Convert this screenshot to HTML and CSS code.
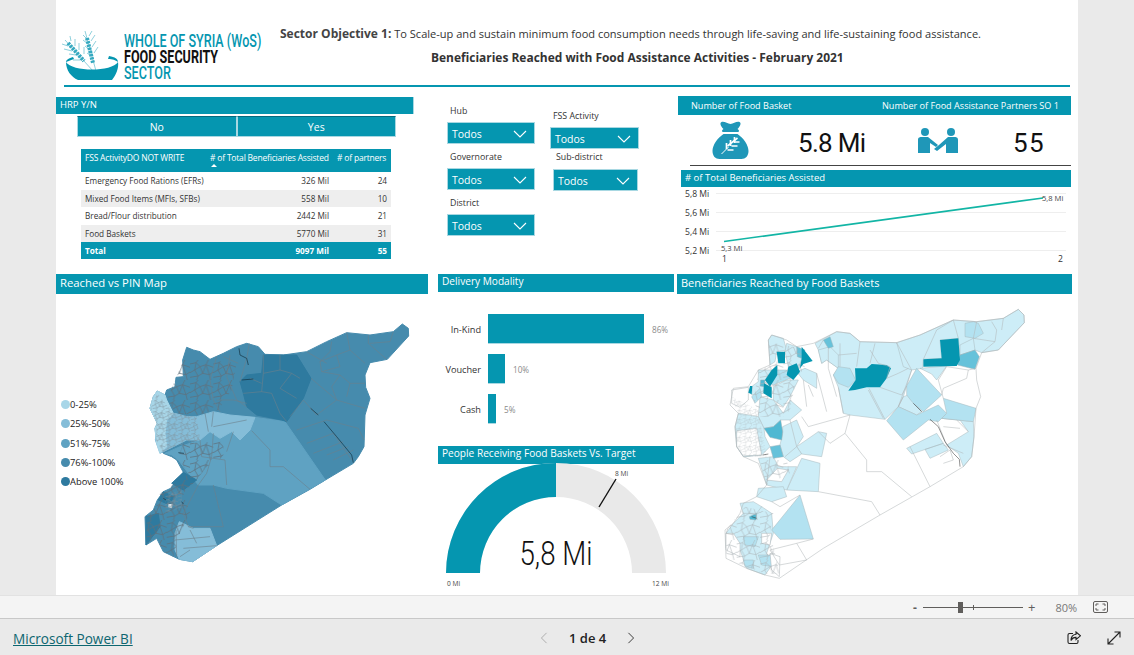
FILE: index.html
```html
<!DOCTYPE html>
<html lang="en">
<head>
<meta charset="utf-8">
<title>Whole of Syria Food Security Sector</title>
<link rel="stylesheet" href="styles.css">
</head>
<body>
<main class="report">
  <header class="head">
    <div class="logo">
      <svg class="logo-mark" viewBox="0 0 60 50" aria-hidden="true">
        <g class="stem">
          <path d="M2 7 L30 38"/>
          <path d="M22 -2 L33 38"/>
          <path d="M5 13 L-1 11 M9 18 L1 16 M13 22 L6 21 M17 27 L10 27 M8 8 L7 3 M12 13 L12 6 M16 17 L16 10 M21 21 L21 14"/>
          <path d="M24 6 L20 2 M25 11 L20 7 M27 17 L22 13 M28 23 L24 20 M26 3 L29 -2 M28 8 L32 2 M29 14 L33 8 M31 20 L35 14"/>
        </g>
        <g class="grain">
          <path d="M5 10 L21 28"/>
          <path d="M24 5 L30 30"/>
        </g>
        <path class="bowl" d="M3 29 C9 39 49 39 55 29 C56 35 53 42 49 47 L15 47 C8 44 3 37 3 29 Z M46 23 C52 24 55 26 55 29 C52 27 50 26 45 26 Z M3 29 C3 27 6 25 10 24 L11 26 C8 27 6 28 3 29 Z"/>
      </svg>
      <div class="logo-text">
        <span class="logo-teal">WHOLE OF SYRIA (WoS)</span>
        <span class="logo-black">FOOD SECURITY</span>
        <span class="logo-teal logo-sector">SECTOR</span>
      </div>
    </div>
    <div class="titles">
      <p class="objective"><strong>Sector Objective 1:</strong> To Scale-up and sustain minimum food consumption needs through life-saving and life-sustaining food assistance.</p>
      <h1 class="main-title">Beneficiaries Reached with Food Assistance Activities - February 2021</h1>
    </div>
  </header>
  <div class="rule"></div>

  <section class="row-top">
    <div class="col-hrp">
      <div class="bar bar-hrp">HRP Y/N</div>
      <div class="tabs">
        <div class="tab">No</div>
        <div class="tab">Yes</div>
      </div>
      <table class="matrix">
        <thead>
          <tr>
            <th class="c1">FSS ActivityDO NOT WRITE</th>
            <th class="c2"># of Total Beneficiaries Assisted<span class="sort"></span></th>
            <th class="c3"># of partners</th>
          </tr>
        </thead>
        <tbody>
          <tr><td>Emergency Food Rations (EFRs)</td><td class="num">326 Mil</td><td class="num">24</td></tr>
          <tr class="alt"><td>Mixed Food Items (MFIs, SFBs)</td><td class="num">558 Mil</td><td class="num">10</td></tr>
          <tr><td>Bread/Flour distribution</td><td class="num">2442 Mil</td><td class="num">21</td></tr>
          <tr class="alt"><td>Food Baskets</td><td class="num">5770 Mil</td><td class="num">31</td></tr>
        </tbody>
        <tfoot>
          <tr><td>Total</td><td class="num">9097 Mil</td><td class="num">55</td></tr>
        </tfoot>
      </table>
    </div>

    <div class="col-filters">
      <div class="filter-col">
        <div class="slicer"><span class="slicer-label">Hub</span><div class="select">Todos<svg class="chev" viewBox="0 0 14 8"><path d="M1 1 L7 7 L13 1"/></svg></div></div>
        <div class="slicer"><span class="slicer-label">Governorate</span><div class="select">Todos<svg class="chev" viewBox="0 0 14 8"><path d="M1 1 L7 7 L13 1"/></svg></div></div>
        <div class="slicer"><span class="slicer-label">District</span><div class="select">Todos<svg class="chev" viewBox="0 0 14 8"><path d="M1 1 L7 7 L13 1"/></svg></div></div>
      </div>
      <div class="filter-col filter-col-2">
        <div class="slicer slicer-fss"><span class="slicer-label">FSS Activity</span><div class="select select-wide">Todos<svg class="chev" viewBox="0 0 14 8"><path d="M1 1 L7 7 L13 1"/></svg></div></div>
        <div class="slicer slicer-sub"><span class="slicer-label">Sub-district</span><div class="select select-sub">Todos<svg class="chev" viewBox="0 0 14 8"><path d="M1 1 L7 7 L13 1"/></svg></div></div>
      </div>
    </div>

    <div class="col-kpi">
      <div class="bar bar-kpi"><span>Number of Food Basket</span><span>Number of Food Assistance Partners SO 1</span></div>
      <div class="kpis">
        <svg class="ico-bag" viewBox="0 0 36 38" aria-hidden="true">
          <path class="ico" d="M9 1 C12 0 15 3 18 3 C21 3 24 0 27 1 C29 2 28 5 25 8 C27 9 27 11 25 11 L11 11 C9 11 9 9 11 8 C8 5 7 2 9 1 Z M11 13 L25 13 C31 17 36 24 36 30 C36 35 33 38 29 38 L7 38 C3 38 0 35 0 30 C0 24 5 17 11 13 Z"/>
          <g class="ico-wheat">
            <path class="ico-stalk" d="M9 33 L16 26"/>
            <path d="M15 25 L25 17"/>
            <path d="M14 22 L14 28 M18 19 L18 25 M22 16 L22 22 M15 29 L21 29 M19 25 L25 25 M22 21 L27 21"/>
          </g>
        </svg>
        <span class="kpi-val kpi-a">5.8 Mi</span>
        <svg class="ico-hands" viewBox="0 0 40 25" aria-hidden="true">
          <circle class="ico" cx="7" cy="4" r="4"/>
          <circle class="ico" cx="33" cy="4" r="4"/>
          <path class="ico" d="M0 12 C0 9 2 9 4 9 L10 9 L20 17 L18 19 L12 15 L12 25 L0 25 Z M40 12 C40 9 38 9 36 9 L30 9 L21 17 L16 21 L19 23 L28 16 L28 25 L40 25 Z"/>
        </svg>
        <span class="kpi-val kpi-b">55</span>
      </div>
      <div class="divider"></div>
      <div class="bar bar-line"># of Total Beneficiaries Assisted</div>
      <svg class="line-chart" viewBox="678 187 393 74" aria-label="Line chart">
        <g class="grid-l">
          <path d="M716 193.5H1066M716 212.5H1066M716 231.5H1066M716 250.5H1066"/>
        </g>
        <g class="axis-t">
          <text x="685" y="197">5,8 Mi</text>
          <text x="685" y="216">5,6 Mi</text>
          <text x="685" y="235">5,4 Mi</text>
          <text x="685" y="254">5,2 Mi</text>
          <text x="722" y="262">1</text>
          <text x="1058" y="262">2</text>
        </g>
        <path class="trend" d="M724 241.5 L1043 198"/>
        <g class="data-t">
          <text x="721" y="251">5,3 Mi</text>
          <text x="1042" y="201">5,8 Mi</text>
        </g>
      </svg>
    </div>
  </section>

  <section class="row-bottom">
    <div class="col-map">
      <div class="bar bar-big">Reached vs PIN Map</div>
      <div class="map-panel">
        <ul class="legend">
          <li><i class="dot d1"></i>0-25%</li>
          <li><i class="dot d2"></i>25%-50%</li>
          <li><i class="dot d3"></i>51%-75%</li>
          <li><i class="dot d4"></i>76%-100%</li>
          <li><i class="dot d5"></i>Above 100%</li>
        </ul>
        <svg class="map" viewBox="18 -18 1116 903" aria-label="Reached versus PIN map of Syria">
          <defs>
            <pattern id="meshA" width="70" height="60" patternUnits="userSpaceOnUse">
              <path class="mesh-a" d="M0 12 L18 8 L30 20 L48 14 L70 22 M18 8 L14 30 L30 20 M30 20 L38 40 L48 14 M14 30 L0 38 M14 30 L24 48 L38 40 L58 44 L70 36 M58 44 L48 14 M24 48 L20 60 M58 44 L62 60 M24 0 L18 8 M55 0 L48 14 M0 52 L24 48"/>
            </pattern>
            <pattern id="meshB" width="70" height="60" patternUnits="userSpaceOnUse" patternTransform="scale(.55)">
              <path class="mesh-b" d="M0 12 L18 8 L30 20 L48 14 L70 22 M18 8 L14 30 L30 20 M30 20 L38 40 L48 14 M14 30 L0 38 M14 30 L24 48 L38 40 L58 44 L70 36 M58 44 L48 14 M24 48 L20 60 M58 44 L62 60 M24 0 L18 8 M55 0 L48 14 M0 52 L24 48"/>
            </pattern>
          </defs>
          <path class="m4" d="M1057 72 L1075 85 L1076 108 L1012 178 L960 188 L945 225 L947 262 L960 295 L945 345 L942 440 L925 470 L910 490 L826 540 L780 568 L695 615 L500 737 L428 785 L388 778 L340 755 L320 715 L288 735 L285 650 L310 630 L322 600 L340 575 L362 565 L400 517 L380 480 L365 470 L340 460 L320 430 L315 385 L322 370 L300 325 L310 290 L322 273 L345 285 L350 270 L375 260 L378 232 L400 230 L398 180 L410 142 L430 150 L450 155 L480 178 L520 160 L560 140 L590 130 L625 140 L645 163 L700 165 L770 155 L830 125 L890 98 L960 105 L1030 95 Z"/>
          <path class="m3" d="M615 352 L705 365 L826 540 L695 615 L640 580 L530 565 L490 555 L445 555 L415 520 L385 480 L365 465 L345 460 L390 440 L450 420 L480 395 L510 415 L545 395 L570 420 L600 390 Z"/>
          <path class="m2" d="M440 350 L490 335 L540 345 L615 352 L600 390 L570 420 L545 395 L510 415 L480 395 L450 420 L410 420 L370 440 L330 460 L316 420 L322 370 L340 350 L375 340 L410 350 Z"/>
          <path class="m1" d="M322 273 L345 285 L350 300 L370 340 L350 360 L345 400 L350 440 L330 460 L320 430 L315 385 L322 370 L300 325 L310 290 Z"/>
          <path class="m2" d="M388 665 L430 685 L480 685 L500 737 L428 785 L388 778 L375 750 L375 700 Z"/>
          <path class="m5" d="M640 165 L740 165 L783 235 L760 295 L710 365 L695 360 L620 345 L590 320 L580 280 L570 245 L590 225 L635 220 Z"/>
          <path class="m5" d="M288 650 L325 640 L330 680 L288 735 Z"/>
          <path class="m5" d="M340 575 L370 590 L360 615 L325 600 Z M365 550 L400 517 L440 540 L400 570 Z"/>
          <path class="m-hole" d="M355 612 L368 612 L366 625 L355 622 Z"/>
          <path class="mesh-fill-a" d="M400 180 L480 180 L560 190 L545 270 L505 330 L440 345 L375 340 L352 295 L378 235 Z"/>
          <path class="mesh-fill-a" d="M400 430 L520 425 L520 470 L470 500 L440 540 L410 515 L385 470 Z"/>
          <path class="mesh-fill-a" d="M330 580 L420 520 L440 540 L400 580 L420 640 L390 700 L370 770 L340 755 L320 715 L290 730 L290 655 L325 610 Z"/>
          <path class="mesh-fill-b" d="M322 280 L370 340 L440 350 L450 420 L370 440 L340 460 L318 420 L320 370 L302 325 Z"/>
          <path class="mesh-fill-b" d="M345 585 L395 570 L395 625 L345 640 Z"/>
          <path class="l" d="M845 125 L840 155 L810 185 L815 215 L870 225 L900 250 L945 250 M890 98 L900 150 L945 190 M955 105 L955 130 L1010 178 M1030 95 L1020 125 L960 130 M810 185 L860 165 L870 200 L815 215 M783 235 L860 300 L800 345 L760 300 M860 300 L945 325 M740 390 L830 360 L925 385 L942 420 M770 430 L850 400 L905 480 M790 460 L880 425 M830 465 L895 440 M850 480 L910 450 M770 155 L830 190 M900 150 L860 165 M870 225 L845 260 L860 300 M900 250 L890 290 M720 350 L760 300"/>
          <path class="l" d="M690 165 L690 210 L640 220 L640 165 M690 210 L725 220 L750 235 M725 220 L690 265 L740 295 M640 220 L635 275 L665 280 L690 340 L710 365 M580 280 L635 275 M600 235 L635 250"/>
          <path class="l" d="M598 130 L590 175 L570 245 M540 165 L530 230 L560 300 L590 320 M500 170 L480 240 L490 300 L510 335 M500 300 L550 300 L590 310 M520 170 L565 190"/>
          <path class="l" d="M490 335 L485 380 M490 380 L590 360 M465 340 L475 395"/>
          <path class="l" d="M450 420 L455 470 L525 480 M490 400 L485 470 L470 520 L445 555 M530 455 L550 395 M525 480 L530 555"/>
          <path class="l" d="M605 392 L660 450 L660 500 L700 500 L780 568 M490 555 L520 680 L415 680 L400 640 L445 555 M378 690 L380 770 M375 720 L480 710 M400 745 L500 737 M390 770 L420 750 M420 690 L440 730 M415 680 L430 685"/>
          <path class="river" d="M822 365 L860 410 L905 465 L910 488 M782 325 L805 345 M567 145 L570 165 L590 175 L595 195 M575 240 L610 237 M385 458 L402 460 M395 605 L400 612 M340 595 L348 600"/>
        </svg>
      </div>
    </div>

    <div class="col-mid">
      <div class="bar bar-mid">Delivery Modality</div>
      <div class="bars">
        <div class="bar-row"><span class="bar-name">In-Kind</span><i class="hbar w86"></i><span class="bar-val">86%</span></div>
        <div class="bar-row"><span class="bar-name">Voucher</span><i class="hbar w10"></i><span class="bar-val">10%</span></div>
        <div class="bar-row"><span class="bar-name">Cash</span><i class="hbar w5"></i><span class="bar-val">5%</span></div>
      </div>
      <div class="bar bar-mid bar-gauge">People Receiving Food Baskets Vs. Target</div>
      <svg class="gauge" viewBox="438 464 236 131" aria-label="Gauge">
        <path class="g-bg" d="M446 573 A110 110 0 0 1 666 573 L632 573 A76 76 0 0 0 480 573 Z"/>
        <path class="g-fg" d="M446 573 A110 110 0 0 1 556 463 L556 497 A76 76 0 0 0 480 573 Z"/>
        <path class="g-target" d="M599 507 L616 479"/>
        <text class="g-small" x="615" y="476">8 Mi</text>
        <text class="g-small" x="447" y="586">0 Mi</text>
        <text class="g-small" x="652" y="586">12 Mi</text>
        <text class="g-value" x="556" y="565" textLength="73" lengthAdjust="spacingAndGlyphs">5,8 Mi</text>
      </svg>
    </div>

    <div class="col-map2">
      <div class="bar bar-big bar-big-2">Beneficiaries Reached by Food Baskets</div>
      <svg class="map map2" viewBox="-39 -18 1185 903" aria-label="Beneficiaries reached by food baskets map of Syria">
        <defs>
          <pattern id="meshC" width="70" height="60" patternUnits="userSpaceOnUse">
            <path class="mesh-c" d="M0 12 L18 8 L30 20 L48 14 L70 22 M18 8 L14 30 L30 20 M30 20 L38 40 L48 14 M14 30 L0 38 M14 30 L24 48 L38 40 L58 44 L70 36 M58 44 L48 14 M24 48 L20 60 M58 44 L62 60 M24 0 L18 8 M55 0 L48 14 M0 52 L24 48"/>
          </pattern>
          <pattern id="meshD" width="70" height="60" patternUnits="userSpaceOnUse" patternTransform="scale(.45)">
            <path class="mesh-c" d="M0 12 L18 8 L30 20 L48 14 L70 22 M18 8 L14 30 L30 20 M30 20 L38 40 L48 14 M14 30 L0 38 M14 30 L24 48 L38 40 L58 44 L70 36 M58 44 L48 14 M24 48 L20 60 M58 44 L62 60 M24 0 L18 8 M55 0 L48 14 M0 52 L24 48"/>
          </pattern>
        </defs>
        <path class="w" d="M985 28 L1002 45 L1003 68 L925 150 L875 158 L858 205 L860 240 L872 290 L858 325 L852 410 L845 470 L820 500 L720 560 L570 645 L400 745 L268 835 L225 825 L170 805 L108 775 L105 690 L130 670 L150 640 L160 610 L200 590 L230 555 L205 490 L160 470 L140 440 L135 380 L145 340 L120 315 L130 265 L175 260 L205 210 L240 195 L235 120 L245 105 L290 120 L320 140 L370 130 L440 95 L480 100 L510 125 L620 128 L690 105 L790 60 L860 65 L940 55 Z"/>
        <g class="p1">
          <path d="M375 130 L440 95 L480 100 L510 125 L620 128 L665 210 L650 258 L640 290 L625 320 L585 358 L480 345 L460 340 L445 262 L430 225 L445 205 L410 180 L395 190 L385 150 Z"/>
          <path d="M620 128 L690 105 L790 60 L860 65 L940 55 L985 28 L1002 45 L1003 68 L925 150 L875 158 L855 150 L810 165 L805 115 L750 120 L755 175 L700 178 L698 205 L665 210 L640 200 L620 128 Z"/>
          <path d="M690 205 L770 198 L740 240 L725 222 Z"/>
          <path d="M640 290 L655 285 L695 335 L680 345 L625 320 Z"/>
          <path d="M755 355 L850 365 L852 410 L845 470 L820 500 L805 460 L770 435 L835 395 L810 360 Z"/>
          <path d="M650 445 L740 400 L760 430 L665 462 Z M705 448 L760 430 L775 450 L720 475 Z"/>
          <path d="M320 440 L385 395 L410 400 L395 470 L335 462 Z"/>
          <path d="M290 570 L335 475 L390 490 L385 575 Z"/>
          <path d="M320 215 L345 205 L380 220 L380 265 L340 240 Z"/>
          <path d="M385 150 L420 140 L445 165 L445 205 L410 180 L395 190 Z"/>
          <path d="M810 165 L810 135 L850 115 L855 150 Z"/>
          <path d="M235 120 L245 105 L280 115 L290 150 L260 155 L255 185 L240 195 Z"/>
          <path d="M290 130 L320 140 L335 175 L330 205 L295 200 L285 155 Z"/>
          <path d="M205 210 L245 210 L225 240 L220 280 L185 285 L187 258 L205 245 Z"/>
          <path d="M250 260 L290 240 L325 240 L300 290 L280 320 L250 300 Z"/>
          <path d="M210 290 L250 300 L280 340 L300 300 L335 330 L300 360 L272 360 L250 380 L222 385 L205 350 Z"/>
          <path d="M145 340 L205 350 L222 385 L225 410 L240 440 L215 465 L170 470 L160 470 L140 440 L135 380 Z"/>
          <path d="M278 380 L320 360 L340 410 L320 440 L335 462 L300 485 L280 470 L270 435 L278 400 Z"/>
          <path d="M205 475 L250 470 L265 500 L290 500 L320 500 L290 570 L230 555 Z"/>
          <path d="M205 565 L280 560 L290 590 L245 605 L200 590 Z"/>
          <path d="M130 670 L160 640 L215 620 L245 640 L250 700 L230 760 L250 790 L225 825 L170 805 L150 750 L108 745 L108 700 Z"/>
          <path d="M150 610 L190 605 L215 620 L200 640 L160 640 Z"/>
        </g>
        <g class="p2">
          <path d="M650 258 L680 205 L755 285 L700 335 L670 310 L650 285 Z"/>
          <path d="M590 362 L625 320 L680 345 L745 315 L770 340 L745 365 L715 360 L640 420 Z"/>
          <path d="M760 295 L858 325 L850 365 L755 355 L770 340 Z"/>
          <path d="M445 200 L480 205 L497 240 L475 262 L445 250 L430 225 Z"/>
          <path d="M245 690 L330 585 L370 717 L270 718 Z"/>
          <path d="M850 65 L865 70 L880 100 L855 115 L825 110 L825 70 Z"/>
          <path d="M185 290 L210 265 L215 290 L195 310 Z M225 240 L255 210 L290 210 L300 235 L250 255 Z"/>
          <path d="M160 780 L190 780 L190 805 L165 800 Z M205 765 L245 765 L250 800 L215 795 Z M160 710 L205 710 L195 740 L165 735 Z"/>
        </g>
        <path class="cell-w" d="M140 392 L200 385 L215 465 L160 468 L140 440 Z M125 270 L175 262 L175 300 L150 322 L125 310 Z M150 770 L108 750 L108 700 L130 700 L150 730 Z M215 700 L245 700 L240 735 L215 730 Z M240 760 L270 770 L268 830 L245 810 Z M262 505 L295 510 L275 545 L230 540 Z"/>
        <g class="p3">
          <path d="M810 165 L855 150 L868 170 L855 208 L803 195 Z"/>
          <path d="M240 440 L270 435 L280 470 L250 475 Z"/>
          <path d="M400 120 L420 110 L430 140 L415 145 Z"/>
          <path d="M320 140 L345 150 L335 175 L322 170 Z"/>
        </g>
        <g class="p4">
          <path d="M250 380 L272 360 L278 395 L275 420 L240 412 L222 385 Z"/>
          <path d="M212 240 L225 240 L222 260 L210 258 Z M178 650 L200 640 L198 660 L180 658 Z"/>
        </g>
        <path class="mesh-fill-c" d="M235 125 L330 145 L345 205 L320 230 L300 330 L280 350 L210 350 L190 300 L205 215 L240 195 Z"/>
        <path class="mesh-fill-c" d="M210 480 L290 480 L300 520 L230 555 Z"/>
        <path class="mesh-fill-c" d="M108 690 L165 620 L250 640 L240 700 L270 820 L225 822 L110 775 Z"/>
        <path class="mesh-fill-d" d="M125 290 L205 330 L230 470 L165 470 L140 440 L135 380 L145 340 Z"/>
        <g class="p5">
          <path d="M700 178 L755 175 L750 120 L805 115 L810 180 L800 198 L700 200 Z"/>
          <path d="M495 205 L530 205 L545 192 L590 195 L603 205 L590 235 L570 262 L530 262 L495 270 L475 272 L497 240 Z"/>
          <path d="M260 155 L285 155 L285 190 L265 190 Z"/>
          <path d="M335 140 L368 183 L340 192 L330 205 L335 175 Z"/>
          <path d="M295 200 L320 190 L330 215 L310 240 L290 225 Z"/>
          <path d="M245 210 L262 195 L262 225 L240 260 L225 240 Z"/>
          <path d="M222 250 L245 262 L245 295 L220 280 Z"/>
          <path d="M180 258 L187 258 L185 283 L175 278 Z"/>
        </g>
        <path class="l2" d="M985 28 L1002 45 L1003 68 L925 150 L875 158 L858 205 L860 240 L872 290 L858 325 L852 410 L845 470 L820 500 L720 560 L570 645 L400 745 L268 835 L225 825 L170 805 L108 775 L105 690 L130 670 L150 640 L160 610 L200 590 L230 555 L205 490 L160 470 L140 440 L135 380 L145 340 L120 315 L130 265 L175 260 L205 210 L240 195 L235 120 L245 105 L290 120 L320 140 L370 130 L440 95 L480 100 L510 125 L620 128 L690 105 L790 60 L860 65 L940 55 Z"/>
        <path class="l2" d="M620 128 L665 210 L625 320 M580 355 L535 270 M460 340 L445 262 M480 345 L355 380 L335 350 M480 345 L465 400 L420 430 L385 395 M465 400 L530 480 L530 515 L575 515 L665 590 M660 440 L720 560 M385 575 L545 605 L570 645 M330 585 L270 620 L245 605 M370 717 L320 730 L240 750 M320 730 L350 780 L268 795 L240 750 M415 145 L415 205 L440 290 M380 220 L410 335 M340 240 L350 320 M355 255 L370 290 M760 295 L745 240 L770 200 L835 210 L830 235 L760 265 L755 285 M858 205 L835 210 M700 178 L740 90 L790 60 M805 115 L790 60 M860 65 L850 115 L915 125 M905 65 L920 90 L915 125 L875 158 M940 55 L935 90 M760 435 L820 460 M750 470 L780 450 L790 480 L760 490 M740 360 L770 435 M800 360 L835 395 M760 380 L810 385 M555 130 L540 190 M510 125 L500 200 M450 130 L450 200 M385 145 L400 120 M285 470 L320 440 M300 360 L320 440 M240 470 L230 555 M565 190 L600 200 L590 235 L625 220 L655 205 M570 262 L635 285 M537 265 L585 358 M625 320 L640 290 M650 258 L635 285 M445 165 L500 160 M565 190 L540 150"/>
        <path class="river2" d="M720 358 L745 380 L765 425 L790 460 L808 478 L810 500 M670 310 L695 335 M218 465 L235 462 M185 650 L200 655"/>
      </svg>
    </div>
  </section>
</main>

<div class="status">
  <span class="zoom-minus">-</span>
  <span class="slider"><i class="thumb"></i><i class="tick"></i></span>
  <span class="zoom-plus">+</span>
  <span class="zoom-val">80%</span>
  <svg class="fit" viewBox="0 0 15 12" aria-hidden="true">
    <rect x="0.5" y="0.5" width="14" height="11" rx="1.5"/>
    <path d="M3 5V3H5.5M12 5V3H9.5M3 7V9H5.5M12 7V9H9.5"/>
  </svg>
</div>

<footer class="footer">
  <a class="brand" href="#">Microsoft Power BI</a>
  <nav class="pager">
    <svg class="pg pg-off" viewBox="0 0 8 14" aria-hidden="true"><path d="M7 1 L1 7 L7 13"/></svg>
    <span class="pg-text">1 de 4</span>
    <svg class="pg" viewBox="0 0 8 14" aria-hidden="true"><path d="M1 1 L7 7 L1 13"/></svg>
  </nav>
  <div class="foot-icons">
    <svg class="fi" viewBox="0 0 14 14" aria-hidden="true"><path d="M6 2.5H2.5C1.5 2.5 1 3 1 4V11C1 12 1.5 12.5 2.5 12.5H9.5C10.5 12.5 11 12 11 11V9"/><path d="M9 1 L13.5 4.8 L9 8.5 V6.4 C6.5 6.3 5 7.3 4 9.5 C4 6 6 3.7 9 3.3 Z"/></svg>
    <svg class="fi" viewBox="0 0 14 14" aria-hidden="true"><path d="M1 13 L13 1 M7.5 1 H13 V6.5 M1 7.5 V13 H6.5"/></svg>
  </div>
</footer>
</body>
</html>
```

FILE: styles.css
```css
* { box-sizing: border-box; }
html, body { margin: 0; height: 100%; }
body {
  width: 1134px;
  height: 655px;
  overflow: hidden;
  background: #eaeaea;
  font-family: "Open Sans", "Noto Sans", sans-serif;
  color: #252423;
  display: flex;
  flex-direction: column;
}
p, h1, ul { margin: 0; padding: 0; }

.report {
  width: 1022px;
  height: 595px;
  margin-left: 56px;
  background: #fff;
  overflow: hidden;
  flex: none;
}

/* Header */
.head { display: flex; height: 85px; }
.logo { display: flex; width: 224px; padding: 33px 0 0 7px; }
.logo-mark { width: 60px; height: 50px; overflow: visible; flex: none; }
.grain path { fill: none; stroke: #35a9c0; stroke-width: 4; stroke-dasharray: 2.4 .9; }
.stem path { fill: none; stroke: #0596b0; stroke-width: .6; opacity: .75; }
.bowl { fill: #0596b0; }
.logo-text {
  display: flex;
  flex-direction: column;
  font-family: Roboto, sans-serif;
  font-size: 18.5px;
  font-weight: 500;
  line-height: 16px;
  margin-left: 1px;
  white-space: nowrap;
  transform: scaleX(.68);
  transform-origin: 0 0;
  flex: none;
  height: 48px;
}
.logo-teal { color: #0596b0; }
.logo-black { color: #111; font-weight: 700; }

.titles { flex: 1; padding-top: 25px; }
.objective { font-size: 11.05px; line-height: 18px; white-space: nowrap; color: #333; }
.objective strong { font-size: 12px; font-weight: 700; color: #444; }
.main-title {
  margin: 6px 0 0 151px;
  font-size: 11.96px;
  line-height: 18px;
  font-weight: 700;
  color: #333;
  white-space: nowrap;
}
.rule { height: 2px; margin: 0 8px; background: #0596b0; }

/* Title bars */
.bar {
  background: #0596b0;
  color: #fff;
  display: flex;
  align-items: center;
  white-space: nowrap;
}
.bar-hrp { width: 358px; height: 17px; margin-top: 10px; padding: 0 0 2px 4px; font-size: 9.5px; border-right: 1px solid #a8d8e2; }
.bar-kpi { height: 19px; justify-content: space-between; padding: 0 12px 0 13px; font-size: 9.1px; }
.bar-line { height: 17px; margin-left: 3px; padding: 0 0 3px 4px; font-size: 9.5px; }
.bar-big { height: 20px; padding: 0 0 3px 4px; font-size: 11.3px; }
.bar-big-2 { font-size: 11px; }
.bar-mid { height: 18px; padding: 0 0 4px 4px; font-size: 10.15px; }

/* Top row */
.row-top { display: flex; height: 187px; }
.col-hrp { width: 382px; flex: none; }
.tabs { display: flex; width: 319px; margin: 2px 0 0 21px; }
.tab {
  flex: 1;
  height: 21px;
  background: #0596b0;
  color: #fff;
  border-top: 1px solid #056a7e;
  border-right: 1px solid #a8d8e2;
  border-bottom: 1px solid #a8d8e2;
  border-left: 1px solid #a8d8e2;
  padding-top: 1px;
  font-size: 10.5px;
  display: flex;
  align-items: center;
  justify-content: center;
}
.matrix {
  width: 310px;
  margin: 12px 0 0 25px;
  border-collapse: collapse;
  table-layout: fixed;
  font-size: 8.2px;
  color: #333;
}
.matrix th {
  background: #0596b0;
  color: #fff;
  font-weight: 400;
  font-size: 8.5px;
  height: 23px;
  padding: 3px 4px 0;
  text-align: left;
  vertical-align: top;
  white-space: nowrap;
  position: relative;
  letter-spacing: -.2px;
}
.c1 { width: 125px; }
.c2 { width: 127px; }
.c3 { width: 58px; }
.sort {
  position: absolute;
  left: 5px;
  top: 15px;
  border: 3px solid transparent;
  border-top: 0;
  border-bottom: 3px solid #fff;
}
.matrix td { height: 17.5px; padding: 0 4px; white-space: nowrap; overflow: hidden; }
.matrix .num { text-align: right; }
.matrix .alt td { background: #eee; }
.matrix tfoot td { background: #0596b0; color: #fff; font-weight: 700; height: 17px; }

.col-filters { display: flex; width: 239px; flex: none; padding: 0 0 0 9px; }
.filter-col { width: 103px; padding-top: 18px; }
.filter-col-2 { padding-top: 23px; }
.slicer { display: flex; flex-direction: column; height: 46px; }
.slicer-fss { height: 41px; }
.slicer-label { font-size: 8.8px; height: 17px; line-height: 12px; padding-left: 3px; color: #333; }
.slicer-sub .slicer-label { margin-left: 3px; height: 18px; }
.select {
  width: 88px;
  height: 22px;
  background: #0596b0;
  color: #fff;
  border: 1px solid #a8d8e2;
  font-size: 10.5px;
  display: flex;
  align-items: center;
  justify-content: space-between;
  padding: 1px 7px 0 4px;
  flex: none;
}
.select-wide { width: 89px; }
.select-sub { width: 85px; margin-left: 3px; }
.chev { width: 14px; height: 8px; }
.chev path { fill: none; stroke: #fff; stroke-width: 1.1; }

.col-kpi { width: 393px; flex: none; margin-left: 1px; padding-top: 9px; }
.kpis { display: flex; height: 49px; }
.ico { fill: #1f97b8; }
.ico-bag { width: 37px; height: 38px; margin: 6px 0 0 34px; flex: none; }
.ico-wheat path { fill: none; stroke: #fff; stroke-width: 1.7; }
.ico-wheat .ico-stalk { stroke-width: 1; }
.kpi-val { font-family: Roboto, sans-serif; font-size: 26px; color: #111; line-height: 30px; margin-top: 13px; white-space: nowrap; }
.kpi-a { width: 66px; margin-left: 49px; letter-spacing: -.7px; flex: none; }
.ico-hands { width: 40px; height: 25px; margin: 13px 0 0 54px; flex: none; }
.kpi-b { margin-left: 55px; letter-spacing: 1.5px; }
.divider { height: 1px; margin: 1px 0 0 12px; background: #444; }
.bar-line { margin-top: 4px; }
.line-chart { display: block; width: 393px; height: 74px; overflow: visible; }
.grid-l path { stroke: #eee; fill: none; }
.axis-t text { font-size: 8.6px; fill: #333; font-family: "Open Sans", sans-serif; }
.trend { stroke: #12b5a5; stroke-width: 1.6; fill: none; }
.data-t text { font-size: 7.6px; fill: #444; font-family: "Open Sans", sans-serif; }

/* Bottom row */
.row-bottom { display: flex; height: 321px; }
.col-map { width: 372px; flex: none; }
.map-panel { position: relative; }
.map { display: block; width: 372px; height: 301px; }
.legend {
  position: absolute;
  left: 5px;
  top: 101px;
  list-style: none;
  font-size: 9.4px;
  color: #222;
}
.legend li { display: flex; align-items: center; height: 19.3px; white-space: nowrap; }
.dot { width: 9px; height: 9px; border-radius: 50%; margin-right: 0; }
.d1, .m1 { background: #a8d6e8; fill: #a8d6e8; stroke: #a8d6e8; }
.d2, .m2 { background: #85bdd8; fill: #85bdd8; stroke: #85bdd8; }
.d3, .m3 { background: #5fa2c2; fill: #5fa2c2; stroke: #5fa2c2; }
.d4, .m4 { background: #468bad; fill: #468bad; stroke: #468bad; }
.d5, .m5 { background: #2e7a9f; fill: #2e7a9f; stroke: #2e7a9f; }
.m1, .m2, .m3, .m4, .m5 { stroke-width: 3; stroke-linejoin: round; }
.m-hole { fill: #dbe8ee; }
.mesh-a { fill: none; stroke: #5f6f7b; stroke-width: 2.2; }
.mesh-b { fill: none; stroke: #7e8f9a; stroke-width: 2.6; }
.mesh-c { fill: none; stroke: #a9b1b4; stroke-width: 1.6; }
.mesh-fill-a { fill: url(#meshA); }
.mesh-fill-b { fill: url(#meshB); }
.mesh-fill-c { fill: url(#meshC); }
.mesh-fill-d { fill: url(#meshD); }
.l { fill: none; stroke: #6c7f8b; stroke-width: 1.8; stroke-linejoin: round; }
.river { fill: none; stroke: #10303f; stroke-width: 2; }

.col-mid { width: 236px; flex: none; margin-left: 10px; }
.bars { height: 154px; padding-top: 22px; }
.bar-row { display: flex; align-items: center; height: 30px; margin-bottom: 10px; font-size: 9.2px; }
.bar-name { width: 43px; text-align: right; margin-right: 7px; color: #333; }
.hbar { display: block; height: 30px; background: #0596b0; border-bottom: 1px solid #a8d8e2; }
.w86 { width: 156px; }
.w10 { width: 17px; }
.w5 { width: 8px; }
.bar-val { margin-left: 8px; font-size: 8.2px; color: #8a8a8a; }
.gauge { display: block; width: 236px; height: 131px; overflow: visible; }
.g-bg { fill: #e9e9e9; }
.g-fg { fill: #0596b0; }
.g-target { stroke: #111; stroke-width: 1.4; }
.g-small { font-size: 6.6px; fill: #444; font-family: "Open Sans", sans-serif; }
.g-value { font-size: 34px; font-weight: 300; fill: #111; text-anchor: middle; font-family: Roboto, sans-serif; }

.col-map2 { width: 395px; flex: none; margin-left: 3px; }
.map2 { width: 395px; height: 301px; }
.w { fill: #fff; }
.p1 path { fill: #cdedf7; stroke: #a9b8bd; stroke-width: 1.5; stroke-linejoin: round; }
.p2 path { fill: #b3e2f1; stroke: #a9b8bd; stroke-width: 1.5; stroke-linejoin: round; }
.p3 path { fill: #66c2da; stroke: #9fb3b9; stroke-width: 1.5; }
.p4 path { fill: #4fb8d2; stroke: #9fb3b9; stroke-width: 1.5; }
.p5 path { fill: #0596b0; }
.cell-w { fill: #fff; stroke: #a9b1b4; stroke-width: 1.5; }
.l2 { fill: none; stroke: #b1b7ba; stroke-width: 1.6; stroke-linejoin: round; }
.river2 { fill: none; stroke: #333; stroke-width: 1.6; }

/* Status bar */
.status {
  height: 24px;
  flex: none;
  background: #f4f4f4;
  border-top: 1px solid #e2e2e2;
  border-bottom: 1px solid #c8c8c8;
  display: flex;
  align-items: center;
  padding-left: 913px;
  color: #605e5c;
  font-size: 12px;
}
.zoom-minus { width: 10px; font-weight: 700; }
.slider { position: relative; width: 100px; height: 1px; background: #605e5c; }
.thumb { position: absolute; left: 35px; top: -5px; width: 5px; height: 11px; background: #605e5c; }
.tick { position: absolute; left: 50px; top: -2px; width: 1px; height: 5px; background: #605e5c; }
.zoom-plus { margin-left: 5px; font-size: 13px; }
.zoom-val { margin-left: 20px; width: 38px; font-size: 11px; color: #777; }
.fit { width: 15px; height: 12px; fill: none; stroke: #605e5c; }

/* Footer */
.footer {
  flex: 1;
  display: flex;
  align-items: center;
  padding: 2px 13px 0;
}
.brand { font-size: 13.6px; color: #0d6670; text-decoration: underline; width: 500px; }
.pager { display: flex; align-items: center; margin-left: 27px; }
.pg { width: 8px; height: 12px; fill: none; stroke: #333; stroke-width: 1.1; }
.pg-off { stroke: #aaa; }
.pg-text { font-size: 13px; font-weight: 600; color: #222; margin: 0 21px; }
.foot-icons { display: flex; gap: 26px; margin-left: auto; }
.fi { width: 14px; height: 14px; fill: none; stroke: #222; stroke-width: 1.1; }
```
